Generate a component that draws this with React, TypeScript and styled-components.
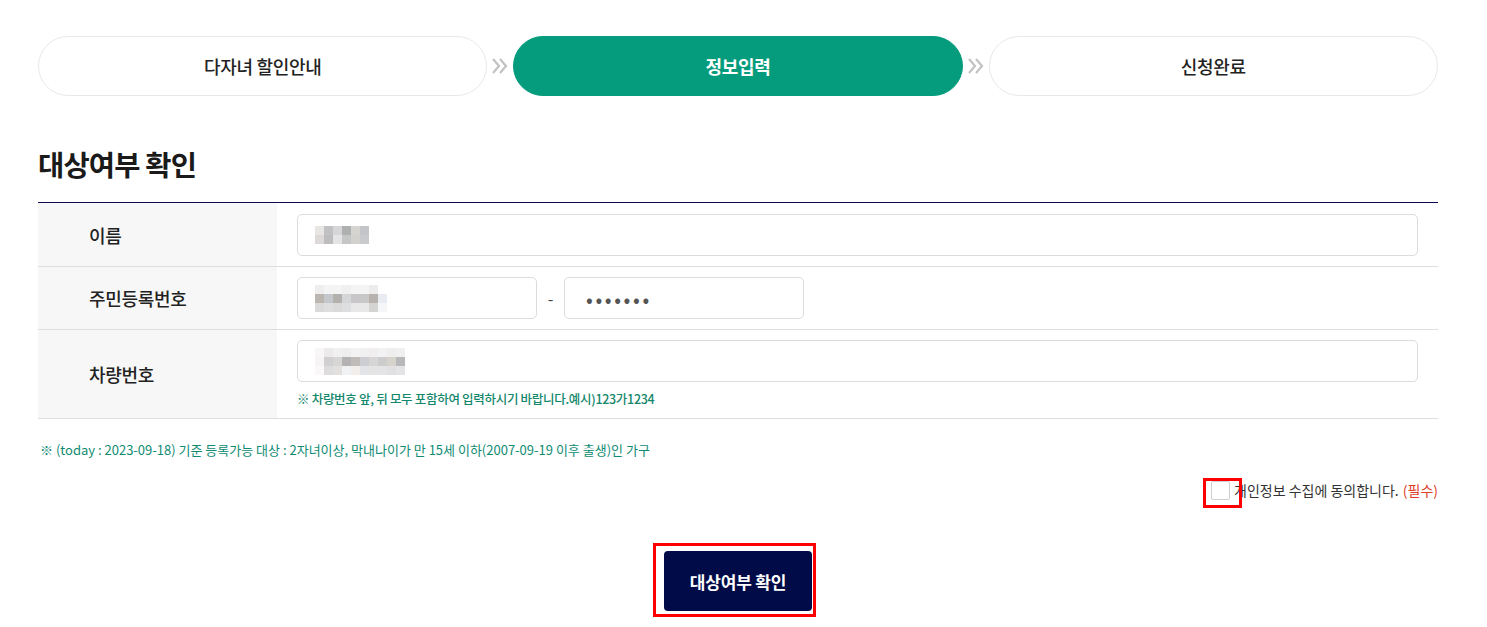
import React from "react";
import styled, { createGlobalStyle } from "styled-components";

const GlobalStyle = createGlobalStyle`
  body {
    margin: 0;
    background: #fff;
    font-family: "Noto Sans CJK KR", "Noto Sans", sans-serif;
    color: #222;
  }
`;

const Page = styled.div`
  width: 1400px;
  padding: 36px 49px 16px 38px;
`;

const Steps = styled.div`
  display: flex;
  align-items: center;
`;

const Step = styled.div<{ $active?: boolean }>`
  flex: 1;
  height: 58px;
  border-radius: 30px;
  border: 1px solid ${(p) => (p.$active ? "#049c7c" : "#e8e8e8")};
  background: ${(p) => (p.$active ? "#049c7c" : "#fff")};
  color: ${(p) => (p.$active ? "#fff" : "#222")};
  font-size: 18px;
  font-weight: ${(p) => (p.$active ? 700 : 500)};
  display: flex;
  align-items: center;
  justify-content: center;
  letter-spacing: -0.3px;
`;

const Arrow = styled.div`
  width: 26px;
  display: flex;
  justify-content: center;
`;

const Title = styled.h2`
  margin: 52px 0 0;
  font-size: 28.5px;
  font-weight: 700;
  line-height: 32px;
  letter-spacing: -0.8px;
  color: #1a1a1a;
`;

const Table = styled.div`
  margin-top: 22px;
  border-top: 1px solid #0b0b4d;
`;

const Field = styled.div`
  padding: 10px 20px;
  display: flex;
  flex-direction: column;
`;

const Row = styled.div`
  display: grid;
  grid-template-columns: 239px 1fr;
  border-bottom: 1px solid #dedede;

  &:first-child ${Field} {
    padding-top: 11px;
  }
`;

const Label = styled.div`
  background: #f7f7f7;
  padding-left: 51px;
  display: flex;
  align-items: center;
  font-size: 18px;
  font-weight: 500;
  letter-spacing: -0.3px;
  color: #222;
`;

const Inline = styled.div`
  display: flex;
  align-items: center;
`;

const Input = styled.div<{ $width?: number }>`
  box-sizing: border-box;
  height: 42px;
  width: ${(p) => (p.$width ? `${p.$width}px` : "100%")};
  border: 1px solid #dcdcdc;
  border-radius: 5px;
  background: #fff;
  display: flex;
  align-items: center;
  padding-left: 17px;
`;

const Dash = styled.span`
  width: 27px;
  text-align: center;
  font-size: 16px;
  color: #444;
`;

const Dots = styled.span`
  padding-left: 4px;
  font-size: 20px;
  letter-spacing: 2.6px;
  color: #555;
`;

const Mosaic = styled.div<{ $cols: number; $cell: number }>`
  display: grid;
  grid-template-columns: repeat(${(p) => p.$cols}, ${(p) => p.$cell}px);
  grid-auto-rows: ${(p) => p.$cell}px;
`;

const Help = styled.p`
  margin: 8px 0 0;
  font-size: 12.5px;
  font-weight: 500;
  line-height: 18px;
  letter-spacing: -0.3px;
  color: #13876b;
`;

const Notice = styled.p`
  margin: 22px 0 0 2px;
  font-size: 13px;
  line-height: 18px;
  letter-spacing: 0;
  color: #0f8b73;
`;

const Consent = styled.div`
  margin-top: 21px;
  display: flex;
  justify-content: flex-end;
  align-items: center;
  font-size: 14px;
  letter-spacing: 0;
  color: #333;
`;

const CheckWrap = styled.span`
  position: relative;
  display: flex;
  margin-right: 4px;
`;

const Check = styled.span`
  display: block;
  width: 17px;
  height: 17px;
  border: 1px solid #cfcfcf;
  border-radius: 2px;
  background: #fff;
`;

const Required = styled.span`
  margin-left: 4px;
  color: #e0402a;
`;

const Highlight = styled.span<{ $t: number; $r: number; $b: number; $l: number }>`
  position: absolute;
  top: ${(p) => p.$t}px;
  right: ${(p) => p.$r}px;
  bottom: ${(p) => p.$b}px;
  left: ${(p) => p.$l}px;
  border: 3px solid #ff0000;
  pointer-events: none;
`;

const ButtonRow = styled.div`
  margin-top: 51px;
  display: flex;
  justify-content: center;
`;

const ButtonWrap = styled.div`
  position: relative;
  display: flex;
`;

const Submit = styled.button`
  display: block;
  width: 148px;
  height: 60px;
  border: 0;
  border-radius: 4px;
  background: #000b48;
  color: #fff;
  font-family: inherit;
  font-size: 17px;
  font-weight: 700;
  letter-spacing: -0.2px;
`;

function DoubleChevron() {
  return (
    <svg width="18" height="18" viewBox="0 0 18 18">
      <g fill="none" stroke="#c2c2c2" strokeWidth="2.2" strokeLinejoin="miter">
        <polyline points="2,2 8,9 2,16" />
        <polyline points="9,2 15,9 9,16" />
      </g>
    </svg>
  );
}

type Cells = string[];

function Blur({ cols, cell, colors }: { cols: number; cell: number; colors: Cells }) {
  return (
    <Mosaic $cols={cols} $cell={cell}>
      {colors.map((c, i) => (
        <span key={i} style={{ background: c }} />
      ))}
    </Mosaic>
  );
}

const nameCells = [
  "#e8e6e3", "#c1c1c3", "#d6d6d8", "#aeb0b0", "#d6d4d0", "#c3c5c9",
  "#dcd9d8", "#bdbdbf", "#e4e4e4", "#c4c6c8", "#d3d1cd", "#c8cacc",
];
const idCells = [
  "#eeeeee", "#f4f4f4", "#f4f4f4", "#f0f0f0", "#f4f4f4", "#f4f4f4", "#ececec", "#ffffff",
  "#bcb6b0", "#c4c8cc", "#b4b0ae", "#d4d6d8", "#c8c6c8", "#c8c8c8", "#b8b2ae", "#e8ecf2",
  "#dadada", "#dedede", "#dadada", "#dcdee0", "#e8e8e8", "#e8e8e8", "#d4d4d2", "#f4f6f8",
];
const carCells = [
  "#f8f6f6", "#eceaea", "#f0f0f0", "#eeeeee", "#f2f2f2", "#f0f0f0", "#f0eeee", "#f2f2f4", "#eeeeee", "#f0f0f0",
  "#f6f4f4", "#d0d0d2", "#d8d6d4", "#b4b2b2", "#c0bcba", "#ccced4", "#d6d6d6", "#cccccc", "#d6d2cc", "#b8b8ba",
  "#faf8f8", "#dcdcdc", "#e2e0de", "#f0f2f4", "#f2eeec", "#e2e4e8", "#e4e4e4", "#e4e4e6", "#e0e0e2", "#e4e4e6",
];

export default function App() {
  return (
    <>
      <GlobalStyle />
      <Page>
        <Steps>
          <Step>다자녀 할인안내</Step>
          <Arrow>
            <DoubleChevron />
          </Arrow>
          <Step $active>정보입력</Step>
          <Arrow>
            <DoubleChevron />
          </Arrow>
          <Step>신청완료</Step>
        </Steps>

        <Title>대상여부 확인</Title>

        <Table>
          <Row>
            <Label>이름</Label>
            <Field>
              <Input>
                <Blur cols={6} cell={9} colors={nameCells} />
              </Input>
            </Field>
          </Row>
          <Row>
            <Label>주민등록번호</Label>
            <Field>
              <Inline>
                <Input $width={240}>
                  <Blur cols={8} cell={9} colors={idCells} />
                </Input>
                <Dash>-</Dash>
                <Input $width={240}>
                  <Dots>•••••••</Dots>
                </Input>
              </Inline>
            </Field>
          </Row>
          <Row>
            <Label>차량번호</Label>
            <Field>
              <Input>
                <Blur cols={10} cell={9} colors={carCells} />
              </Input>
              <Help>※ 차량번호 앞, 뒤 모두 포함하여 입력하시기 바랍니다.예시)123가1234</Help>
            </Field>
          </Row>
        </Table>

        <Notice>
          ※ (today : 2023-09-18) 기준 등록가능 대상 : 2자녀이상, 막내나이가 만 15세 이하(2007-09-19 이후 출생)인 가구
        </Notice>

        <Consent>
          <CheckWrap>
            <Check />
            <Highlight $t={-3} $r={-12} $b={-8} $l={-8} />
          </CheckWrap>
          개인정보 수집에 동의합니다.
          <Required>(필수)</Required>
        </Consent>

        <ButtonRow>
          <ButtonWrap>
            <Submit type="button">대상여부 확인</Submit>
            <Highlight $t={-8} $r={-4} $b={-6} $l={-11} />
          </ButtonWrap>
        </ButtonRow>
      </Page>
    </>
  );
}
